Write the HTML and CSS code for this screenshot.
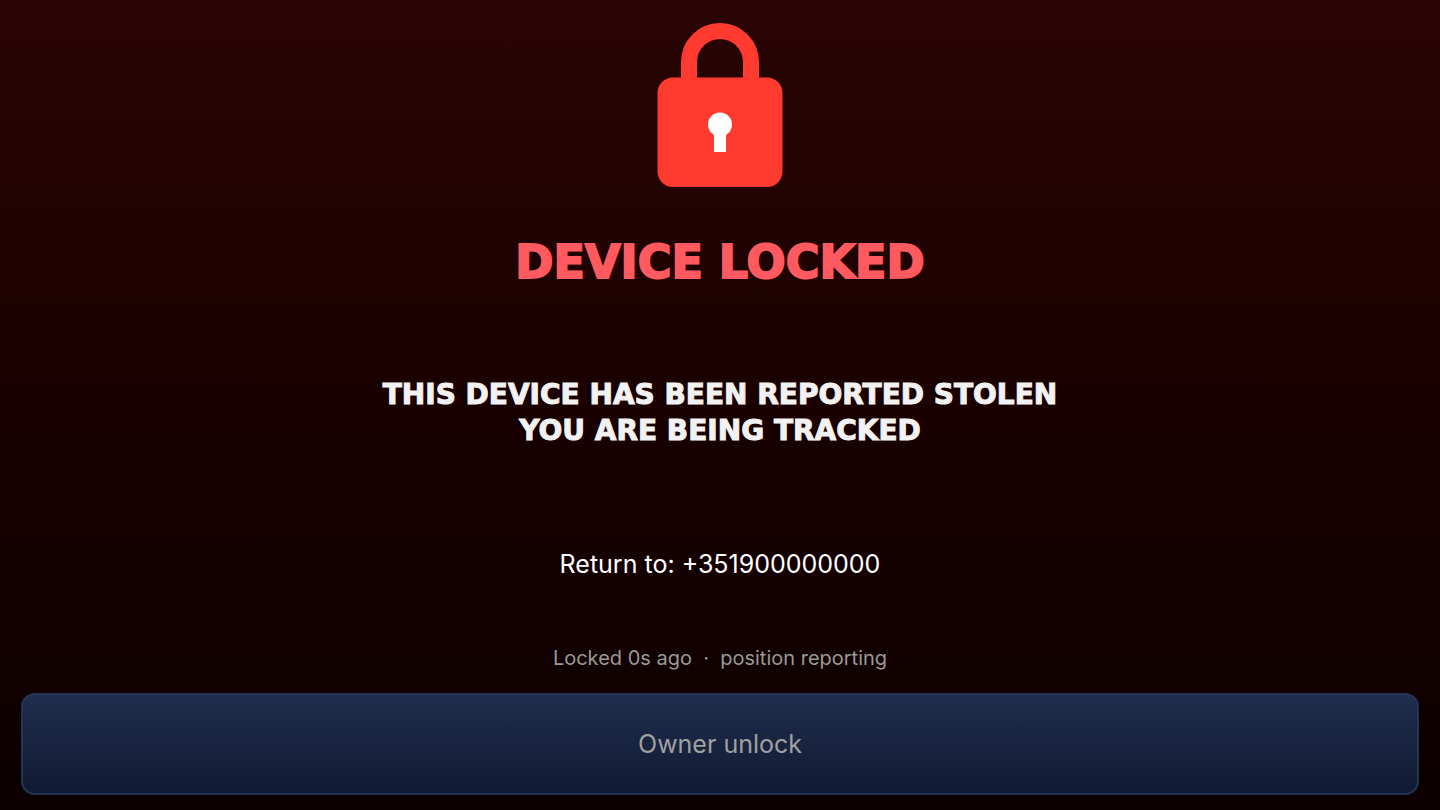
FILE: index.html
```
<!DOCTYPE html>
<html lang="en">

<head>
    <meta charset="UTF-8">
    <meta name="viewport" content="width=device-width, initial-scale=1.0">
    <title>Device Locked</title>
    <link rel="stylesheet" href="styles.css">
</head>

<body>
    <main class="lock-screen">
        <svg class="lock-icon" viewBox="0 0 126 166" aria-hidden="true">
            <path d="M32 60V40a31 31 0 0 1 62 0v20" fill="none" stroke="#ff3b30" stroke-width="16"/>
            <rect x="0.5" y="55.5" width="125" height="109.5" rx="15.5" fill="#ff3b30"/>
            <circle cx="63" cy="102.5" r="12" fill="#fff"/>
            <rect x="57" y="108" width="12" height="22" fill="#fff"/>
        </svg>

        <h1>DEVICE LOCKED</h1>

        <p class="message">THIS DEVICE HAS BEEN REPORTED STOLEN<br>YOU ARE BEING TRACKED</p>

        <p class="contact">Return to: +351900000000</p>

        <p class="status">Locked 0s ago &nbsp;·&nbsp; position reporting</p>

        <button type="button" class="unlock-btn">Owner unlock</button>
    </main>
</body>

</html>
```
FILE: styles.css
```
* {
    margin: 0;
    padding: 0;
    box-sizing: border-box;
}
body {
    font-family: Inter, "Liberation Sans", sans-serif;
    background-color: #0c0000;
    color: white;
}
.lock-screen {
    min-height: 100vh;
    padding: 22px 21px 15px;
    display: flex;
    flex-direction: column;
    align-items: center;
    text-align: center;
    background: linear-gradient(#2a0505, #1a0000 50%, #0c0000);
}
.lock-icon {
    width: 126px;
    height: 166px;
}
h1,
.message {
    font-family: "DejaVu Sans", Verdana, sans-serif;
    font-weight: bold;
    -webkit-text-stroke: 1px currentColor;
}
h1 {
    margin-top: 42px;
    font-size: 46px;
    line-height: 64px;
    color: #ff5a5f;
    -webkit-text-stroke-width: 2px;
}
.message {
    margin-top: 83px;
    font-size: 28px;
    line-height: 36px;
    color: #f2f2f2;
}
.contact {
    margin-top: 99px;
    font-size: 25px;
    line-height: 32px;
}
.status {
    margin-top: 66px;
    font-size: 20px;
    line-height: 24px;
    color: #999;
}
.unlock-btn {
    width: 100%;
    height: 102px;
    margin-top: auto;
    border: 2px solid #233456;
    border-radius: 14px;
    background: linear-gradient(#1f2e4d, #111a33);
    color: #a0a0a0;
    font-family: inherit;
    font-size: 25px;
    cursor: pointer;
}
```
